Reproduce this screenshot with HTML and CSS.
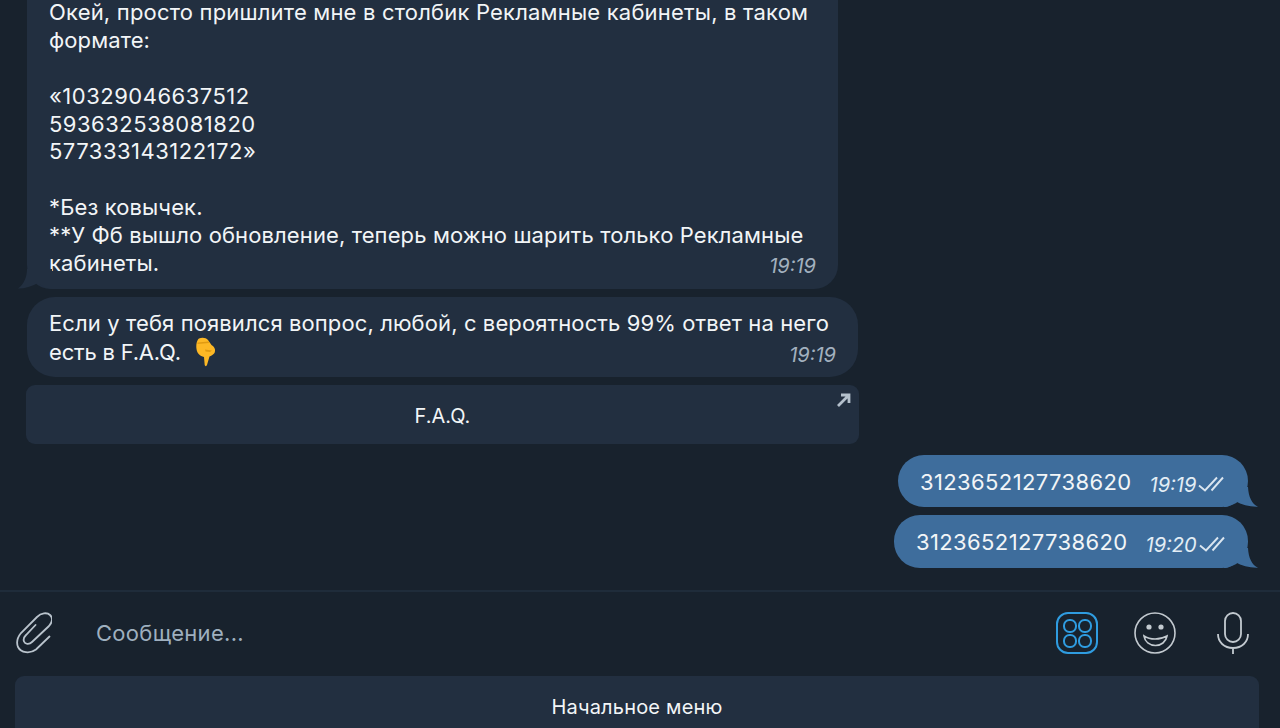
FILE: index.html
```html
<!DOCTYPE html>
<html lang="ru">
<head>
<meta charset="utf-8">
<title>Чат</title>
<link rel="stylesheet" href="styles.css">
</head>
<body>
<main class="chat">
  <div class="messages">
    <div class="bubble in first">
      <svg class="tail tail-in" width="34" height="20" viewBox="0 0 34 20"><path d="M9 0C9 8 6 15 0 19.500C7 19.500 14 17.500 20 14C24 17.500 29 19.500 34 20V0Z"/></svg>
      <p class="text"><span class="wide">Окей, просто пришлите мне в столбик Рекламные кабинеты, в таком</span>
формате:

<span class="num">«10329046637512
593632538081820
577333143122172»</span>

*Без ковычек.
**У Фб вышло обновление, теперь можно шарить только Рекламные</p>
      <div class="last-line">
        <p class="text">кабинеты.</p>
        <time class="time">19:19</time>
      </div>
    </div>
    <div class="bubble in second">
      <p class="text">Если у тебя появился вопрос, любой, с вероятность 99% ответ на него</p>
      <div class="last-line">
        <p class="text"><span class="tight">есть в F.A.Q.</span> <svg class="emoji" width="26" height="30" viewBox="0 0 26 30"><path fill="#fdb825" d="M7 1.500C10 0 14 .5 16 3L19.500 8C22.500 10 24 12.500 22.500 16C21 18 19 19 17.500 19.500L15 28C14.500 29.500 13 29.500 12.700 28L12 20C8 19 5 16.500 4.500 12C4 8 4.500 3.500 7 1.500Z"/><path fill="#e09a12" d="M5.500 5.500L16.500 4.500L17 6L5.500 7ZM13 12.500L20 13.500L18 15L13.500 14.500Z"/></svg></p>
        <time class="time">19:19</time>
      </div>
    </div>
    <a class="inline-btn">
      <span>F.A.Q.</span>
      <svg class="arrow" width="16" height="16" viewBox="0 0 16 16"><path d="M2 14L13 3M5 3H13V11" fill="none" stroke="#b4c0cc" stroke-width="2.800"/></svg>
    </a>
    <div class="bubble out third">
      <svg class="tail tail-out" width="34" height="20" viewBox="0 0 34 20"><path d="M24 0C24.500 10 28 17 34 19.700C26 20 18 18 11 14C9 18 4 20 0 20V0Z"/></svg>
      <p class="text">3123652127738620</p>
      <time class="time">19:19</time>
      <svg class="checks" width="27" height="16" viewBox="0 0 27 16"><path d="M2 9.500L8 14.500L20 1.500M14.500 14.500L26 1.500" fill="none" stroke="#dbe6f0" stroke-width="1.900"/></svg>
    </div>
    <div class="bubble out fourth">
      <svg class="tail tail-out" width="34" height="20" viewBox="0 0 34 20"><path d="M24 0C24.500 10 28 17 34 19.700C26 20 18 18 11 14C9 18 4 20 0 20V0Z"/></svg>
      <p class="text">3123652127738620</p>
      <time class="time">19:20</time>
      <svg class="checks" width="27" height="16" viewBox="0 0 27 16"><path d="M2 9.500L8 14.500L20 1.500M14.500 14.500L26 1.500" fill="none" stroke="#dbe6f0" stroke-width="1.900"/></svg>
    </div>
  </div>
  <div class="composer">
    <svg class="icon clip" width="36" height="42" viewBox="0 0 36 42"><path d="M33.500 24.500L20 37.500C14 42 5 41 2 35C0 30 1 26 5 21L21 5C25 1 31 0 34 3C37 6 36.500 10 33 14L16 30C13 33 9 32 8 29.500C7 27 8 25 10 23L19.500 13" fill="none" stroke="#b9c3cc" stroke-width="1.800" stroke-linecap="round"/></svg>
    <div class="placeholder">Сообщение...</div>
    <svg class="icon commands" width="42" height="42" viewBox="0 0 42 42"><rect x="1" y="1" width="40" height="40" rx="11" fill="none" stroke="#2f9ce0" stroke-width="2"/><g fill="none" stroke="#2f9ce0" stroke-width="2"><rect x="8" y="8" width="12" height="12" rx="5.500"/><rect x="23" y="8" width="12" height="12" rx="5.500"/><rect x="8" y="23" width="12" height="12" rx="5.500"/><rect x="23" y="23" width="12" height="12" rx="5.500"/></g></svg>
    <svg class="icon smile" width="42" height="42" viewBox="0 0 42 42"><circle cx="21" cy="21" r="20" fill="none" stroke="#c3cad0" stroke-width="1.600"/><circle cx="15" cy="15" r="2.600" fill="#c3cad0"/><circle cx="27" cy="15" r="2.600" fill="#c3cad0"/><path d="M10 24C16 28 26 28 33 24C32 30 27 33.500 21.500 33.500C15.500 33.500 11 30 10 24Z" fill="none" stroke="#c3cad0" stroke-width="1.600"/></svg>
    <svg class="icon mic" width="32" height="42" viewBox="0 0 32 42"><rect x="8" y="1" width="16" height="29" rx="8" fill="none" stroke="#c3cad0" stroke-width="1.800"/><path d="M1 22C1 30 7 36 16 36C25 36 31 30 31 22M16 36V42" fill="none" stroke="#c3cad0" stroke-width="1.800"/></svg>
  </div>
  <div class="keyboard"><button class="menu-btn">Начальное меню</button></div>
</main>
</body>
</html>
```
FILE: styles.css
```css
* { box-sizing: border-box; }
html, body { margin: 0; height: 100%; overflow: hidden; }
body { background: #18222d; font-family: Inter, "Noto Sans", sans-serif; color: #f2f5f7; }
.chat { height: 728px; display: flex; flex-direction: column; overflow: hidden; }
.messages { height: 590px; flex: none; display: flex; flex-direction: column; justify-content: flex-end; align-items: flex-start; padding-bottom: 22px; overflow: hidden; }
.text { margin: 0; white-space: pre-wrap; font-size: 22px; line-height: 27.8px; letter-spacing: 0.11px; }
.num { letter-spacing: 0.5px; }
.wide { letter-spacing: 0.19px; }
.tight { letter-spacing: -0.2px; }
.bubble { position: relative; flex: none; }
.last-line { display: flex; justify-content: space-between; align-items: center; }
.time { font-size: 20px; font-style: italic; line-height: 24px; }
.in { background: #222f40; margin-left: 27px; }
.in .time { color: #a3b1bf; }
.out { background: #3e6d9c; align-self: flex-end; margin-right: 32px; display: flex; align-items: center; border-radius: 26px; }
.out .text { white-space: nowrap; line-height: 28px; letter-spacing: 0.38px; padding-top: 1px; }
.out .time { color: #e3edf5; margin: 7px 0 0 18px; }
.first { width: 811px; height: 317px; padding: 27.4px 22px 0; border-radius: 24px; }
.first .time { margin-top: 4px; }
.second { width: 831px; height: 80px; margin-top: 8px; padding: 12.6px 22px 0; border-radius: 28px; }
.second .time { margin-top: 5px; }
.emoji { display: inline-block; vertical-align: -7px; margin-left: 5px; }
.inline-btn { flex: none; width: 833px; height: 59px; margin: 8px 0 0 26px; padding-top: 2px; background: #222f40; border-radius: 9px; display: flex; align-items: center; justify-content: center; font-size: 20px; position: relative; }
.arrow { position: absolute; top: 7px; right: 7px; }
.third { width: 350px; height: 52px; margin-top: 11px; padding-left: 22px; }
.fourth { width: 354px; height: 53px; margin-top: 8px; padding-left: 22px; }
.checks { margin: 5px 0 0 1px; }
.tail { position: absolute; bottom: 0; }
.tail path { fill: currentColor; }
.tail-in { left: -9px; color: #222f40; }
.tail-out { right: -10px; color: #3e6d9c; }
.composer { flex: none; height: 86px; border-top: 2px solid #1f2c3a; display: flex; align-items: center; padding: 0 31px 2px 16px; }
.placeholder { flex: 1; margin-left: 44px; font-size: 22px; color: #9fb0bf; letter-spacing: 0.3px; }
.commands { margin-right: 36px; }
.smile { margin-right: 41px; }
.keyboard { flex: none; padding: 0 21px 0 15px; }
.menu-btn { width: 100%; height: 80px; border: 0; padding: 0 0 18px; background: #222f40; border-radius: 9px; color: #f2f5f7; font: 20px Inter, "Noto Sans", sans-serif; letter-spacing: 0.2px; }
```
